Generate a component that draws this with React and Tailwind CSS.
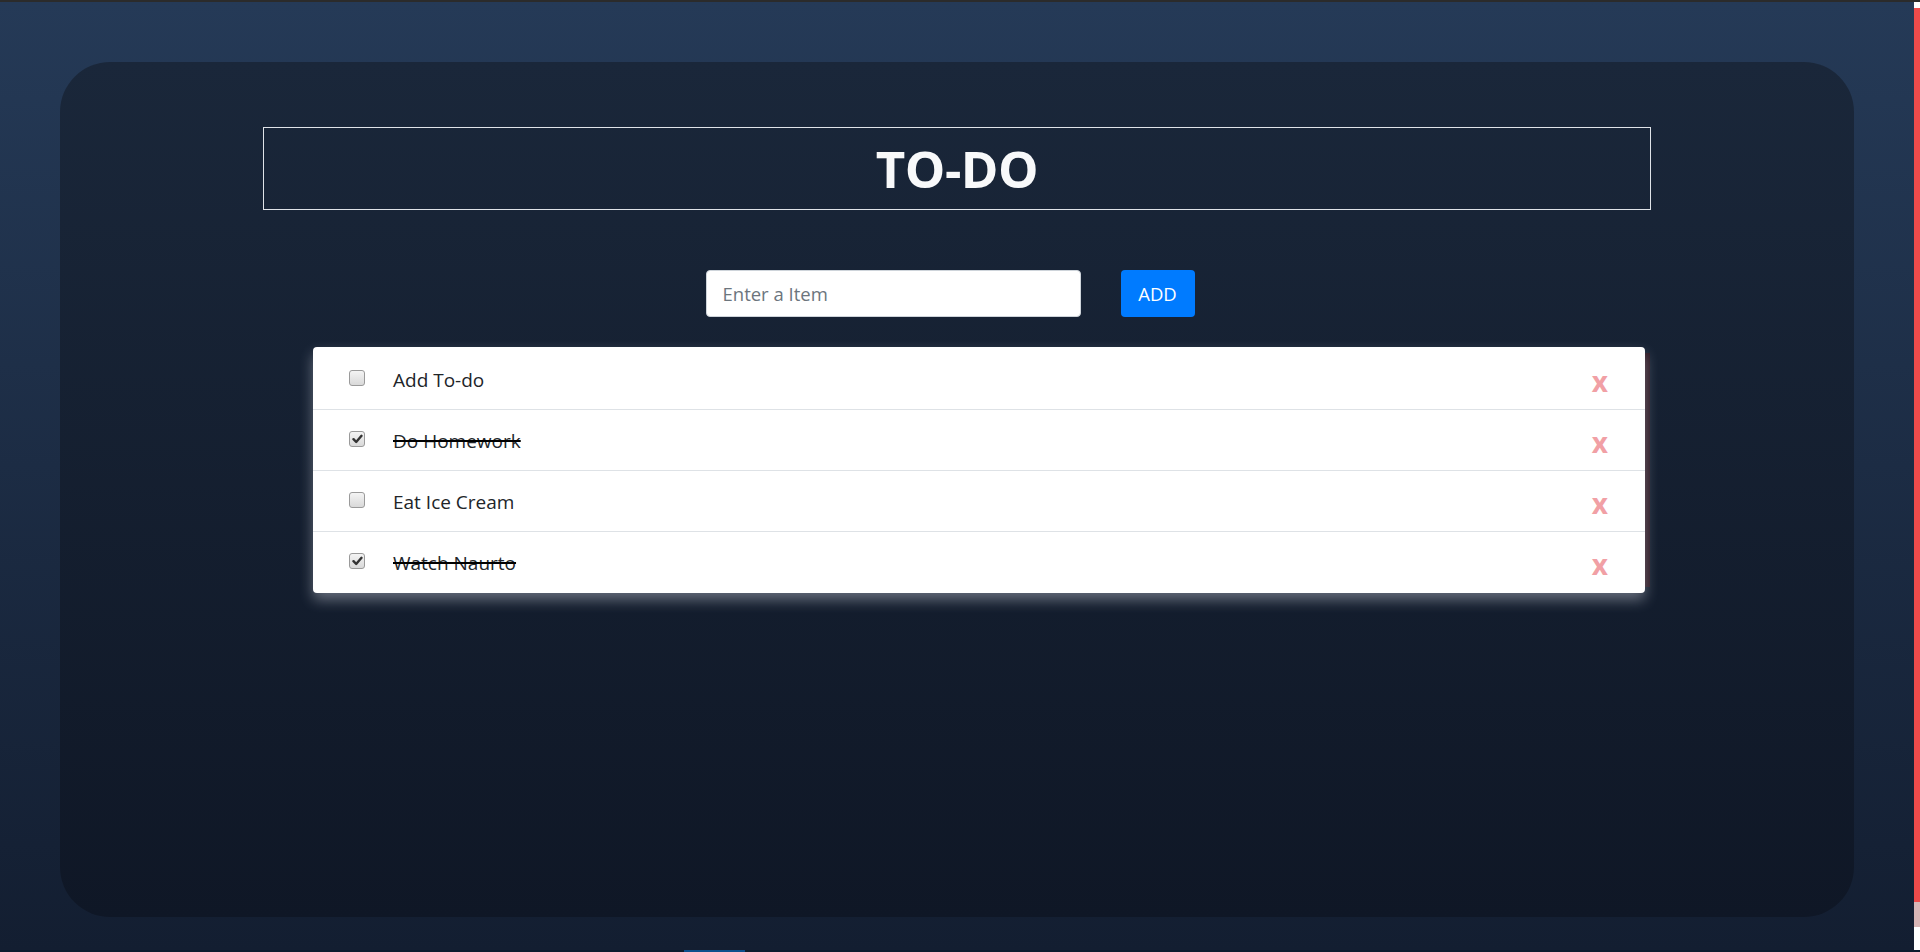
import React, { useState } from "react";

const FONT = { fontFamily: '"Open Sans", "Noto Sans", Arial, sans-serif' };

const initialItems = [
  { id: 1, text: "Add To-do", done: false },
  { id: 2, text: "Do Homework", done: true },
  { id: 3, text: "Eat Ice Cream", done: false },
  { id: 4, text: "Watch Naurto", done: true },
];

const CheckBox = ({ checked, onChange }) => (
  <button
    type="button"
    onClick={onChange}
    className="w-4 h-4 -mt-[3px] shrink-0 rounded-[3px] border border-[#9a9a9a] bg-gradient-to-b from-[#f4f4f4] to-[#d9d9d9] flex items-center justify-center"
  >
    {checked && (
      <svg width="11" height="10" viewBox="0 0 11 10">
        <path
          d="M1.5 5.2 L4.2 8 L9.5 1.8"
          fill="none"
          stroke="#333"
          strokeWidth="2.4"
          strokeLinecap="round"
          strokeLinejoin="round"
        />
      </svg>
    )}
  </button>
);

const TodoRow = ({ item, onToggle, onDelete, last }) => (
  <div
    className={`flex items-center h-[61px] pl-9 pr-[37px] ${
      last ? "" : "border-b border-[#dee2e6]"
    }`}
  >
    <CheckBox checked={item.done} onChange={onToggle} />
    <span
      className={`ml-7 mt-[2px] text-[19px] text-[#212529] ${
        item.done ? "line-through decoration-2 decoration-black" : ""
      }`}
    >
      {item.text}
    </span>
    <button
      type="button"
      onClick={onDelete}
      className="ml-auto mt-[3px] text-[28px] font-bold leading-none text-[#f1a0a5]"
    >
      x
    </button>
  </div>
);

export default function App() {
  const [items, setItems] = useState(initialItems);
  const [value, setValue] = useState("");

  const addItem = () => {
    if (!value.trim()) return;
    setItems([...items, { id: Date.now(), text: value, done: false }]);
    setValue("");
  };

  const toggle = (id) =>
    setItems(items.map((i) => (i.id === id ? { ...i, done: !i.done } : i)));

  const remove = (id) => setItems(items.filter((i) => i.id !== id));

  return (
    <div className="w-full h-[952px] flex flex-col overflow-hidden" style={FONT}>
      <div className="h-[2px] bg-[#2b2b2b] shrink-0" />
      <div className="flex flex-1 min-h-0">
        <div className="flex-1 bg-gradient-to-b from-[#253a57] to-[#131e31] pt-[60px] px-[60px] pb-[33px] flex">
          <div className="flex-1 rounded-[50px] bg-gradient-to-b from-[#1a273a] to-[#0f1726] pt-[65px] flex flex-col">
            <div className="mx-[203px] h-[83px] border border-[#dfe3e8] flex items-center justify-center">
              <h1 className="text-[51px] font-bold text-[#f8f9fa] leading-none tracking-[-0.5px]">
                TO-DO
              </h1>
            </div>

            <div className="mt-[60px] flex justify-center gap-10 pr-[14px]">
              <input
                type="text"
                value={value}
                onChange={(e) => setValue(e.target.value)}
                placeholder="Enter a Item"
                className="w-[375px] h-[47px] rounded-[4px] border border-[#ced4da] bg-white px-4 text-[18.5px] text-[#495057] placeholder:text-[#6c757d] outline-none"
              />
              <button
                type="button"
                onClick={addItem}
                className="w-[74px] h-[47px] rounded-[4px] bg-[#007bff] text-white text-[18.5px]"
              >
                ADD
              </button>
            </div>

            <div className="mt-[30px] ml-[253px] mr-[209px] pt-[2px] bg-white rounded-[4px] shadow-[0_7px_14px_rgba(200,205,215,0.45),11px_0_0_-6px_#2d1823]">
              {items.map((item, idx) => (
                <TodoRow
                  key={item.id}
                  item={item}
                  last={idx === items.length - 1}
                  onToggle={() => toggle(item.id)}
                  onDelete={() => remove(item.id)}
                />
              ))}
            </div>
          </div>
        </div>
        <div className="w-[6px] shrink-0 flex flex-col">
          <div className="h-[6px] bg-white" />
          <div className="flex-1 bg-[#ee4b4b]" />
          <div className="h-[25px] bg-[#d9b6b6]" />
          <div className="h-[23px] bg-white" />
        </div>
      </div>
      <div className="h-[2px] bg-[#0c1d2e] shrink-0 flex">
        <div className="ml-[684px] w-[61px] bg-[#0b4f8c]" />
      </div>
    </div>
  );
}
